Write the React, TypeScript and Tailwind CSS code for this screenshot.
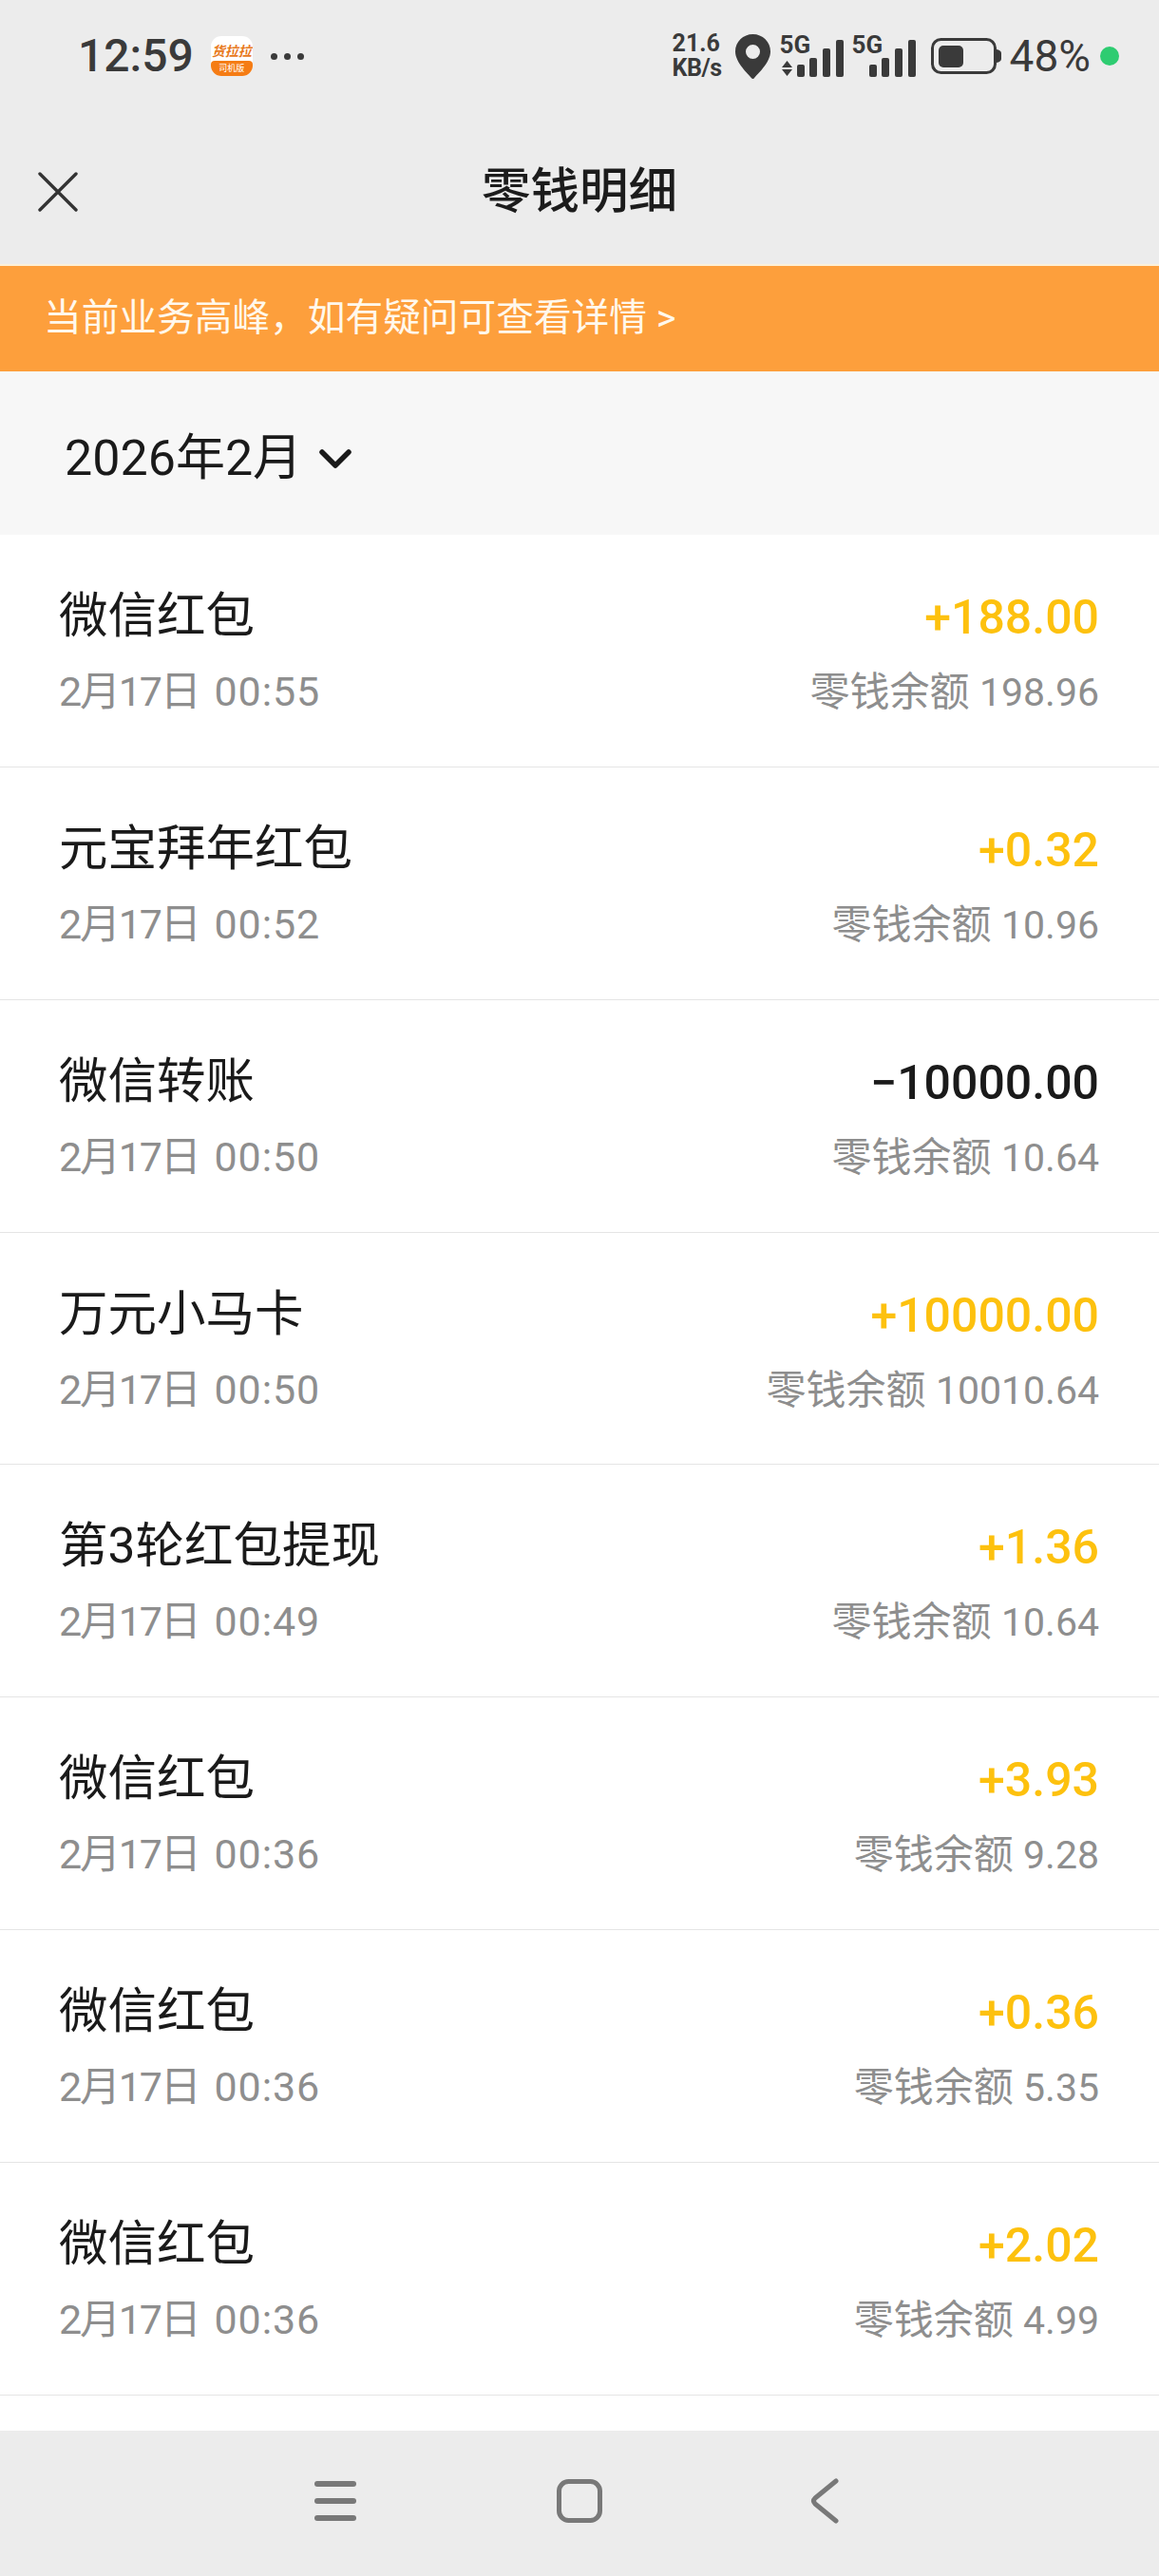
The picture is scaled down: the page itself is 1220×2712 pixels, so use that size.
const cjk = "font-['Roboto','Noto_Sans_CJK_SC',sans-serif]";

interface Txn {
  title: string;
  time: string;
  amount: string;
  balance: string;
}

const txns: Txn[] = [
  { title: "微信红包", time: "00:55", amount: "+188.00", balance: "198.96" },
  { title: "元宝拜年红包", time: "00:52", amount: "+0.32", balance: "10.96" },
  { title: "微信转账", time: "00:50", amount: "−10000.00", balance: "10.64" },
  { title: "万元小马卡", time: "00:50", amount: "+10000.00", balance: "10010.64" },
  { title: "第3轮红包提现", time: "00:49", amount: "+1.36", balance: "10.64" },
  { title: "微信红包", time: "00:36", amount: "+3.93", balance: "9.28" },
  { title: "微信红包", time: "00:36", amount: "+0.36", balance: "5.35" },
  { title: "微信红包", time: "00:36", amount: "+2.02", balance: "4.99" },
];

function AppBadge() {
  return (
    <div className="ml-[18px] flex h-[42px] w-[44px] flex-col overflow-hidden rounded-[11px] bg-white">
      <div className="flex h-[26px] items-end justify-center text-[14px] leading-[19px] font-bold text-[#e8791c] italic">货拉拉</div>
      <div className="flex flex-1 items-center justify-center rounded-t-[4px] bg-[#f57c14] text-[9px] leading-none text-white">司机版</div>
    </div>
  );
}

function Signal({ arrows }: { arrows?: boolean }) {
  return (
    <div className="relative h-[44px] w-[68px]">
      <span className="absolute top-0 left-0 font-['Roboto',sans-serif] text-[26px] leading-[20px] font-bold">5G</span>
      <svg width="68" height="44" viewBox="0 0 68 44" fill="#3a3a3a">
        {arrows && <path d="M7.5 27l5.5 7H2zM2 36h11l-5.5 7z" />}
        <rect x="18" y="31" width="8" height="13" rx="2" />
        <rect x="31" y="24" width="8" height="20" rx="2" />
        <rect x="45" y="14" width="8" height="30" rx="2" />
        <rect x="59" y="5" width="8" height="39" rx="2" />
      </svg>
    </div>
  );
}

function StatusBar() {
  return (
    <div className="flex h-[126px] items-center pb-[8px] text-[#3a3a3a]">
      <div className="ml-[82px] font-['Roboto',sans-serif] text-[48px] leading-none font-medium">12:59</div>
      <AppBadge />
      <div className="ml-[19px] flex gap-[7px]">
        <span className="size-[7px] rounded-full bg-[#3a3a3a]" />
        <span className="size-[7px] rounded-full bg-[#3a3a3a]" />
        <span className="size-[7px] rounded-full bg-[#3a3a3a]" />
      </div>
      <div className="ml-auto flex items-center pr-[42px]">
        <div className="flex w-[66px] flex-col font-['Roboto',sans-serif] text-[25px] leading-[26px] font-bold">
          <span>21.6</span>
          <span className="-tracking-[0.5px]">KB/s</span>
        </div>
        <svg width="37" height="47" viewBox="0 0 37 47">
          <path fillRule="evenodd" fill="#3a3a3a" d="M18.5 0C8.3 0 0 8 0 18.2 0 30 14 42 17 46.2c.8 1 2.2 1 3 0C23 42 37 30 37 18.2 37 8 28.7 0 18.5 0zm0 11a7.5 7.5 0 1 1 0 15 7.5 7.5 0 0 1 0-15z" />
        </svg>
        <div className="ml-[10px]"><Signal arrows /></div>
        <div className="ml-[8px]"><Signal /></div>
        <svg className="ml-[15px]" width="75" height="38" viewBox="0 0 75 38">
          <rect x="1.5" y="1.5" width="66" height="35" rx="9" fill="none" stroke="#3a3a3a" strokeWidth="3" />
          <rect x="8" y="8" width="26" height="23" rx="5" fill="#3a3a3a" />
          <path d="M69 12c3 .5 5 2 5 4v6c0 2-2 3.5-5 4z" fill="#3a3a3a" />
        </svg>
        <div className="ml-[8px] font-['Roboto',sans-serif] text-[46px] leading-none">48%</div>
        <span className="ml-[10px] size-[20px] rounded-full bg-[#2ecc71]" />
      </div>
    </div>
  );
}

function NavBar() {
  return (
    <div className="grid h-[152px] grid-cols-[1fr_auto_1fr] items-center pl-[40px]">
      <svg width="42" height="42" viewBox="0 0 42 42" fill="none" stroke="#333" strokeWidth="3.4" strokeLinecap="round">
        <path d="M2 2l38 38M40 2L2 40" />
      </svg>
      <div className={`${cjk} -ml-[40px] text-[51.5px] leading-none font-medium text-[#1c1c1c]`}>零钱明细</div>
      <div />
    </div>
  );
}

function Row({ txn }: { txn: Txn }) {
  const isIncome = txn.amount.startsWith("+");
  return (
    <div className="flex h-[244.86px] shrink-0 justify-between border-b border-[#e5e5e5] pr-[63px] pl-[62px]">
      <div className="flex flex-col pt-[51px]">
        <div className="text-[51.5px] leading-[70px] text-[#1a1a1a]">{txn.title}</div>
        <div className="mt-[9px] flex gap-[16px] text-[43px] leading-[70px] text-[#8e8e8e]">
          <span className="-tracking-[2.2px]">2月17日</span>
          <span className="tracking-[0.9px]">{txn.time}</span>
        </div>
      </div>
      <div className="flex flex-col items-end pt-[52px]">
        <div className={`text-[50px] leading-[70px] font-medium ${isIncome ? "text-[#fdc10e]" : "text-[#1a1a1a]"}`}>{txn.amount}</div>
        <div className="mt-[9px] text-[42px] leading-[70px] text-[#8e8e8e]">
          零钱余额 <span className="text-[41px]">{txn.balance}</span>
        </div>
      </div>
    </div>
  );
}

function BottomNav() {
  return (
    <div className="flex h-[153px] shrink-0 items-center gap-[210px] bg-[#ececec] pb-[6px] pl-[330px]">
      <svg width="46" height="46" viewBox="0 0 46 46" fill="#787878">
        <rect x="1" y="2" width="44" height="6" rx="3" />
        <rect x="1" y="20" width="44" height="6" rx="3" />
        <rect x="1" y="38" width="44" height="6" rx="3" />
      </svg>
      <svg width="48" height="46" viewBox="0 0 48 46" fill="none">
        <rect x="2.5" y="2.5" width="43" height="41" rx="10" stroke="#787878" strokeWidth="5" />
      </svg>
      <svg className="ml-[9px]" width="30" height="48" viewBox="0 0 30 48" fill="none">
        <path d="M27 3L5 21c-2 2-2 4 0 6l22 18" stroke="#787878" strokeWidth="5" strokeLinecap="round" strokeLinejoin="round" />
      </svg>
    </div>
  );
}

export default function App() {
  return (
    <div className={`${cjk} flex h-[2712px] w-[1220px] flex-col overflow-hidden bg-white`}>
      <div className="shrink-0 bg-[#ececec]">
        <StatusBar />
        <NavBar />
      </div>

      <div className="flex h-[113px] shrink-0 items-center border-t-2 border-[#fdf0d8] bg-[#fd9f3c] pb-[2px] pl-[46px] text-[39.7px] leading-none text-[#fff8ec]">
        当前业务高峰，如有疑问可查看详情 &gt;
      </div>

      <div className="flex h-[172px] shrink-0 items-center bg-[#f7f7f7] pt-[12px] pl-[68px] text-[#1a1a1a]">
        <span className="text-[52px] leading-none">2026年2月</span>
        <svg className="ml-[18px]" width="34" height="22" viewBox="0 0 34 22" fill="none" stroke="#1a1a1a" strokeWidth="5.5" strokeLinecap="round" strokeLinejoin="round">
          <path d="M3 4l14 14L31 4" />
        </svg>
      </div>

      <div className="flex min-h-0 flex-1 flex-col overflow-hidden">
        {txns.map((txn, i) => (
          <Row key={i} txn={txn} />
        ))}
      </div>

      <BottomNav />
    </div>
  );
}
